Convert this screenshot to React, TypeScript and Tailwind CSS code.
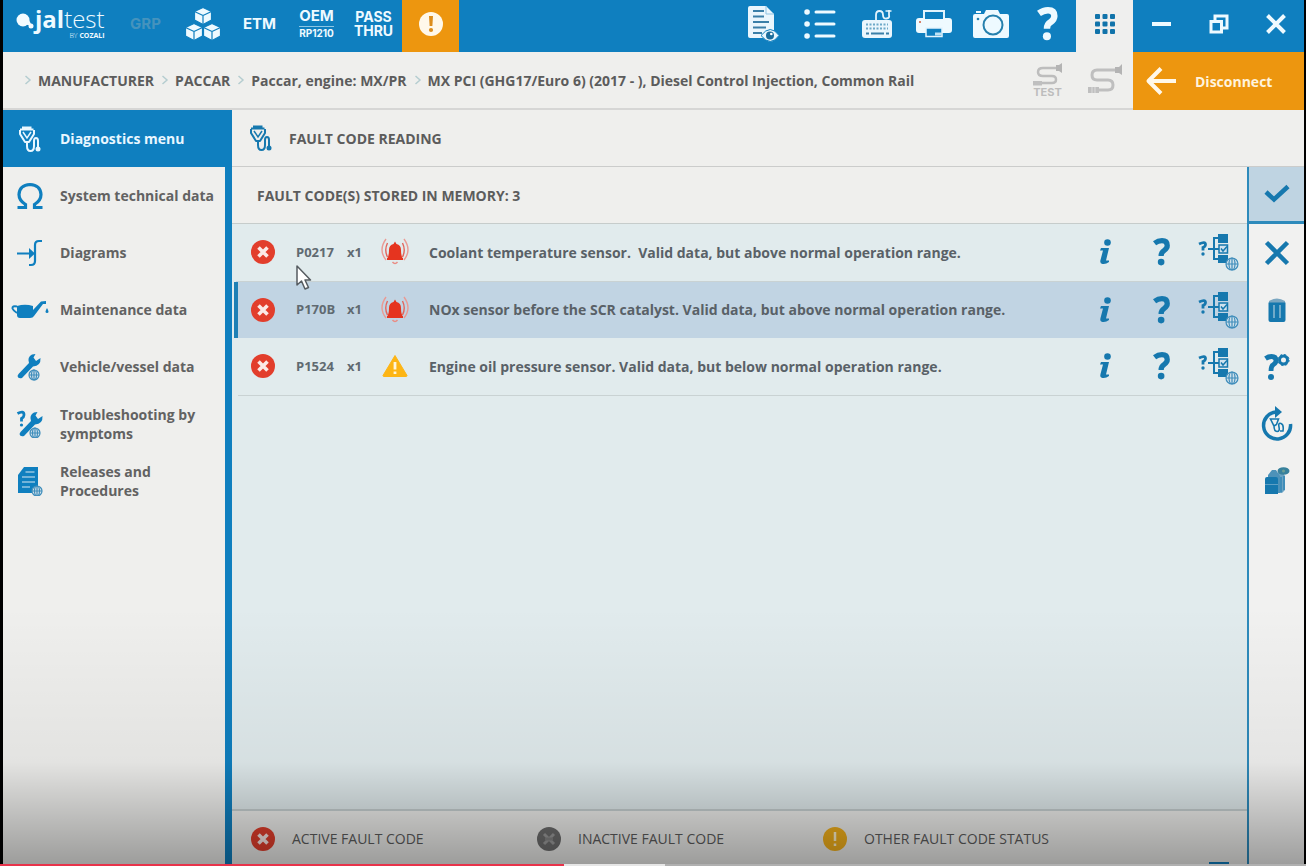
import type { ReactNode } from "react";
import clsx from "clsx";

interface IconProps {
  className?: string;
}

const CubesIcon = () => (
  <svg width="36" height="34" viewBox="0 0 36 34" fill="#eefaff" stroke="#0f7fbf" strokeWidth="1.2" strokeLinejoin="round">
    {[
      [18, 0],
      [9, 16],
      [27, 16],
    ].map(([x, y]) => (
      <g key={x} transform={`translate(${x} ${y})`}>
        <path d="M0 0.5 L8.5 4.5 V13 L0 17.5 L-8.5 13 V4.5 Z" />
        <path d="M-8.5 4.5 L0 8.5 L8.5 4.5 M0 8.5 V17.5" fill="none" />
      </g>
    ))}
  </svg>
);

const AlertIcon = () => (
  <svg width="26" height="26" viewBox="0 0 26 26">
    <circle cx="13" cy="13" r="12" fill="#fff8ea" />
    <path d="M11 5h4l-.6 10h-2.800z" fill="#dc8d1c" />
    <circle cx="13" cy="19" r="2.100" fill="#dc8d1c" />
  </svg>
);

const DocumentEyeIcon = () => (
  <svg width="34" height="38" viewBox="0 0 34 38">
    <path d="M2 3a2 2 0 0 1 2-2h16l8 8v24H4a2 2 0 0 1-2-2z" fill="#eaf6fd" />
    <path d="M20 1v8h8" fill="none" stroke="#8fc3e2" />
    <path d="M7 6h11M7 11.500h11M7 17h16M7 22.500h13M7 28h9" stroke="#3a7fa8" strokeWidth="2" />
    <path d="M15 30.500q9.500-12 18 0q-8.500 12-18 0z" fill="#eaf6fd" stroke="#0f7fbf" strokeWidth="1" />
    <circle cx="24" cy="30.500" r="4" fill="#1c6d9c" />
    <circle cx="25.300" cy="29" r="1.300" fill="#fff" />
  </svg>
);

const ListIcon = () => (
  <svg width="32" height="32" viewBox="0 0 32 32" stroke="#eefaff" strokeWidth="3" strokeLinecap="round">
    <path d="M12 4h18M12 16h18M12 28h18" />
    <path d="M3 4h.1M3 16h.1M3 28h.1" strokeWidth="5.500" />
  </svg>
);

const KeyboardIcon = () => (
  <svg width="32" height="34" viewBox="0 0 32 34" fill="none">
    <path d="M15 13V8q0-4 3.500-4t3.500 4t3.500 3.500t2.500-3.500V3" stroke="#e3f4fd" strokeWidth="1.800" />
    <path d="M24.500 4h6" stroke="#e3f4fd" strokeWidth="1.500" />
    <rect x="1" y="13" width="30" height="18" rx="3" fill="#eaf6fd" />
    <path d="M5 17.500h22M5 21.500h22" stroke="#6ca8c8" strokeWidth="2" strokeDasharray="2 1.500" />
    <path d="M5 26.500h3M10 26.500h13M25 26.500h3" stroke="#3a7fa8" strokeWidth="2" />
  </svg>
);

const PrinterIcon = () => (
  <svg width="38" height="30" viewBox="0 0 38 30">
    <path d="M9 9V2h20v7" fill="#0f7fbf" stroke="#e3f4fd" strokeWidth="2" />
    <path d="M4 9h30a3 3 0 0 1 3 3v9a3 3 0 0 1-3 3H4a3 3 0 0 1-3-3v-9a3 3 0 0 1 3-3z" fill="#eefaff" />
    <path d="M10 9h18" stroke="#0f7fbf" strokeWidth="2" />
    <circle cx="5" cy="13" r="1" fill="#d15a38" />
    <path d="M11 19h16v8.500H11z" fill="#0f7fbf" stroke="#e3f4fd" strokeWidth="1.500" />
    <path d="M20 23.500h7v3h-7z" fill="#bfe2f4" />
  </svg>
);

const CameraIcon = () => (
  <svg width="38" height="30" viewBox="0 0 38 30">
    <path d="M3 5h9l2-4h12l2 4h7a2 2 0 0 1 2 2v20a2 2 0 0 1-2 2H3a2 2 0 0 1-2-2V7a2 2 0 0 1 2-2z" fill="#eefaff" />
    <path d="M4 3h5" stroke="#eefaff" strokeWidth="2" />
    <circle cx="21" cy="16" r="9.500" fill="none" stroke="#2580ad" strokeWidth="2" />
    <circle cx="6" cy="10" r="1.300" fill="#2580ad" />
  </svg>
);

const QuestionIcon = ({ className = "w-5 h-8" }: IconProps) => (
  <svg className={className} viewBox="0 0 20 32" fill="none">
    <path d="M1.500 6q4-3 8.500-3q6 0 6 5.500q0 3.200-3.500 5.700q-3.500 2-3.500 6.300" stroke="currentColor" strokeWidth="6" />
    <circle cx="9" cy="27.500" r="3.800" fill="currentColor" />
  </svg>
);

const GridIcon = () => (
  <svg width="22" height="22" viewBox="0 0 22 22" fill="#1173aa">
    {[1, 8.5, 16].map((y) => [1, 8.5, 16].map((x) => <rect key={`${x}-${y}`} x={x} y={y} width="5" height="5" rx="1" />))}
  </svg>
);

const MinimizeIcon = () => (
  <svg width="20" height="20" viewBox="0 0 20 20" stroke="#eefaff" strokeWidth="4">
    <path d="M0 10h19" />
  </svg>
);

const RestoreIcon = () => (
  <svg width="20" height="20" viewBox="0 0 20 20" fill="none" stroke="#eefaff" strokeWidth="3">
    <path d="M6 6V2h12v12h-4" />
    <path d="M2 7.500h10.500V18H2z" />
  </svg>
);

const CloseIcon = () => (
  <svg width="20" height="20" viewBox="0 0 20 20" stroke="#eefaff" strokeWidth="4">
    <path d="M1.500 1.500l17 17M18.500 1.500l-17 17" />
  </svg>
);

const CableIcon = () => (
  <svg width="36" height="32" viewBox="0 0 36 32" fill="none" stroke="#bfbfbf">
    <path d="M28 6H10q-5 0-5 5t5 5h11q5 0 5 5t-5 5H11" strokeWidth="3" />
    <path d="M28 3v6h4l3 2V0l-3 3z" fill="#b4b4b4" stroke="none" />
    <path d="M1 23h11v6H1z" fill="#bfbfbf" stroke="none" />
    <path d="M5 23v6M8 23v6" stroke="#dcdcdc" />
  </svg>
);

const CableTestIcon = () => (
  <svg width="30" height="24" viewBox="0 0 30 24" fill="none" stroke="#bdbdbd">
    <path d="M24 5H10q-5 0-5 4t5 4h9q4 0 4 3.500T19 20H8" strokeWidth="2.500" />
    <path d="M23 2v6h3l3 2V0l-3 2z" fill="#b4b4b4" stroke="none" />
    <path d="M0 18h9v4.500H0z" fill="#bfbfbf" stroke="none" />
  </svg>
);

const ArrowLeftIcon = () => (
  <svg width="32" height="28" viewBox="0 0 32 28" fill="none" stroke="#fff8ea" strokeWidth="4">
    <path d="M2.500 14H31M16 1.500L3.500 14L16 26.500" strokeLinejoin="round" />
  </svg>
);

const ProbeIcon = () => (
  <svg width="24" height="28" viewBox="0 0 24 28" fill="none" stroke="currentColor" strokeWidth="2">
    <path d="M2 4.500L15.500 4.500M4 2.500h9.500M2 5v4l5 8h4l5-8V5" strokeLinejoin="round" />
    <path d="M5 7l4 6l4-6" strokeWidth="1.500" />
    <path d="M9 17v4q0 5 3.500 5t3.500-5v-5q0-3 2-3t2 3v7" />
    <circle cx="20" cy="24" r="2.500" fill="currentColor" stroke="none" />
  </svg>
);

const OmegaIcon = () => (
  <svg width="28" height="28" viewBox="0 0 28 28" fill="none" stroke="currentColor" strokeWidth="3.200">
    <path d="M1.500 25.500H9.500V22.500Q3 18.500 3 12.500Q3.500 3 14 2.500Q24.500 3 25 12.500Q25 18.500 18.500 22.500V25.500H26.500" />
  </svg>
);

const DiagramIcon = () => (
  <svg width="26" height="28" viewBox="0 0 26 28" fill="none" stroke="currentColor" strokeWidth="2.200">
    <path d="M0 14.500h16M25 2h-3q-4 0-4 4v16q0 4-4 4h-2" />
    <path d="M12 9l6 5.500l-6 5.500z" fill="currentColor" stroke="none" />
  </svg>
);

const OilCanIcon = () => (
  <svg width="38" height="20" viewBox="0 0 38 20">
    <path d="M6 6Q14 3.500 22 6v4L30 1.500l5-.5v3h-3L23 16q-1 2-4 2H9q-3 0-3-3z" fill="currentColor" />
    <path d="M6 6.500Q1 5.500 1.500 8.500Q2.500 11 6 13" fill="none" stroke="currentColor" strokeWidth="2" />
    <path d="M36 8q3 5 0 5t0-5z" fill="currentColor" />
  </svg>
);

const Globe = ({ x, y, r = 5 }: { x: number; y: number; r?: number }) => (
  <g transform={`translate(${x} ${y})`} fill="none" stroke="#3f8dbb" strokeWidth="1.200">
    <circle r={r} fill="#cfe0ea" />
    <ellipse rx={r / 2} ry={r} />
    <path d={`M${-r} 0H${r}M0 ${-r}V${r}`} />
  </g>
);

const wrenchPath = "M1.500 21L12 10Q10 4 15 1.500L18.500 1L16.500 4.500L19 8L23.500 5Q24 13 16 13.500L5 25Q1 26 .5 23z";

const WrenchIcon = () => (
  <svg width="26" height="28" viewBox="0 0 26 28">
    <path d={wrenchPath} fill="currentColor" />
    <Globe x={17} y={22} />
  </svg>
);

const QuestionWrenchIcon = () => (
  <svg width="28" height="28" viewBox="0 0 28 28">
    <path d="M1.500 3.500Q8 0 8 5Q8 7 5.500 8.500V11.500" fill="none" stroke="currentColor" strokeWidth="2.800" />
    <circle cx="5.500" cy="15" r="1.600" fill="currentColor" />
    <path d={wrenchPath} transform="translate(3 1)" fill="currentColor" />
    <Globe x={19} y={23} />
  </svg>
);

const DocumentGlobeIcon = () => (
  <svg width="26" height="30" viewBox="0 0 26 30">
    <path d="M7 1h14v21H7z" fill="currentColor" />
    <path d="M1 9L7 1V26H1z" fill="currentColor" />
    <path d="M1 22h14v5H1z" fill="currentColor" />
    <path d="M8.500 6h9M5 11h13M5 16h13M5 21h8" stroke="#d8e8f1" strokeWidth="1.200" />
    <Globe x={20} y={25} />
  </svg>
);

const FaultIcon = () => (
  <svg width="26" height="26" viewBox="0 0 26 26">
    <circle cx="13" cy="13" r="12" fill="#e23e2c" />
    <path d="M8.500 8.500l9 9M17.500 8.500l-9 9" stroke="#fbe9e6" strokeWidth="3.600" />
  </svg>
);

const InactiveIcon = () => (
  <svg width="26" height="26" viewBox="0 0 26 26">
    <circle cx="13" cy="13" r="12" fill="#6e6e6e" />
    <path d="M8 8l10 10M18 8l-10 10" stroke="#9c9c9c" strokeWidth="3" />
    <path d="M9 13h8" stroke="#858585" strokeWidth="3" />
  </svg>
);

const OtherStatusIcon = () => (
  <svg width="26" height="26" viewBox="0 0 26 26">
    <circle cx="13" cy="13" r="12" fill="#f2b01c" />
    <path d="M13 6v9M13 17.500v2.500" stroke="#fff3cf" strokeWidth="2.500" />
  </svg>
);

const BellIcon = () => (
  <svg width="28" height="28" viewBox="0 0 28 28" fill="none">
    <path d="M6 20.500q2-2 2-8.500q0-5 4.500-6l1.500-2.500l1.500 2.500q4.500 1 4.500 6q0 6.500 2 8.500z" fill="#e5341f" />
    <path d="M6 21h16" stroke="#e5341f" strokeWidth="2" />
    <path d="M11.500 24q2.500 3 5 0" stroke="#e98d85" strokeWidth="1.500" />
    <path d="M6.500 5q-3.500 7 0 14M21.500 5q3.500 7 0 14" stroke="#e2655c" strokeWidth="1.400" />
    <path d="M5 1q-8 11 0 21M23 1q8 11 0 21" stroke="#ea9a94" strokeWidth="1.400" />
  </svg>
);

const WarningIcon = () => (
  <svg width="26" height="24" viewBox="0 0 26 24">
    <path d="M13 1.500L25 21.500Q25 22.500 24 22.500H2Q1 22.500 1 21.500z" fill="#fdb515" stroke="#fdb515" strokeLinejoin="round" />
    <path d="M13 8v7.500M13 17.500v2.500" stroke="#fff6da" strokeWidth="2.800" />
  </svg>
);

const InfoIcon = () => (
  <svg width="14" height="28" viewBox="0 0 14 28" fill="currentColor">
    <circle cx="9.500" cy="4.500" r="3.300" />
    <path d="M3 10h8l-3 12.500h3v1.500q-3 2.500-6.500 2Q1.500 25.500 2.500 22L5 12.500H2z" />
  </svg>
);

const TreeIcon = () => (
  <svg width="44" height="40" viewBox="0 0 44 40" fill="none">
    <path d="M2 12q6.500-3 6.500.500q0 1.800-2.500 3v3" stroke="currentColor" strokeWidth="2.800" />
    <circle cx="6" cy="22" r="1.700" fill="currentColor" />
    <path d="M11 17h11M22 6h-5v21h5" stroke="currentColor" strokeWidth="2" />
    <path d="M21 2h10v9H21zM21 23h10v8H21z" fill="currentColor" />
    <path d="M22 13h8.500v8H22z" fill="#cfe2ee" stroke="currentColor" strokeWidth="1.500" />
    <path d="M24 16.500l2 2.500l4-4.500" stroke="currentColor" strokeWidth="1.500" />
    <Globe x={35} y={32} r={6} />
  </svg>
);

const CheckIcon = () => (
  <svg width="26" height="20" viewBox="0 0 26 20" fill="none" stroke="currentColor" strokeWidth="4.500">
    <path d="M2 8l8 7.500L24 2.500" />
  </svg>
);

const ClearIcon = () => (
  <svg width="26" height="26" viewBox="0 0 26 26" fill="none" stroke="currentColor" strokeWidth="4.500">
    <path d="M2.500 2.500l21 21M23.500 2.500l-21 21" />
  </svg>
);

const TrashIcon = () => (
  <svg width="20" height="28" viewBox="0 0 20 28">
    <path d="M2 5q8-5 16 0v3H2z" fill="#7ba7c1" />
    <path d="M1.500 6.500h17V24q0 2-2 2h-13q-2 0-2-2z" fill="currentColor" />
    <path d="M7 9v13M13 9v13" stroke="#8fbad2" strokeWidth="1.500" />
  </svg>
);

const QuestionGearIcon = () => (
  <svg width="28" height="30" viewBox="0 0 28 30" fill="none" stroke="currentColor">
    <path d="M2.500 6.500q3-2 6-2q4.500 0 4.500 4q0 2.500-2.500 4q-2.500 1.500-2.500 6.500" strokeWidth="4.800" />
    <circle cx="8" cy="25" r="3" fill="currentColor" stroke="none" />
    <circle cx="20.500" cy="8" r="4" strokeWidth="3" />
    <circle cx="20.500" cy="8" r="5.600" strokeWidth="1" strokeDasharray="2.200 2.200" />
  </svg>
);

const RefreshIcon = () => (
  <svg width="34" height="36" viewBox="0 0 34 36" fill="none">
    <path d="M16 6A13.500 13.500 0 1 0 30.500 18" stroke="currentColor" strokeWidth="3.500" />
    <path d="M15 0l7 6l-7 6z" fill="currentColor" />
    <g stroke="currentColor" strokeWidth="1.600">
      <path d="M10.500 13h8l-2 5.500l-2.500 1.500zM14 19.500q0 6 3 6t2-4.500t2-3.500t2 7.500h-3" />
    </g>
  </svg>
);

const ArchiveIcon = () => (
  <svg width="28" height="30" viewBox="0 0 28 30">
    <path d="M8 7h12l2 3v14l-3 3H8z" fill="#6ba3c3" />
    <path d="M5 9l4-5h4l4 6V27H5z" fill="#4d92b9" />
    <path d="M2 13q0-2 2-2h9q2 0 2 2v15H2z" fill="currentColor" />
    <path d="M2 18.500h13" stroke="#5fa0c4" />
    <path d="M18 11v15M21 10v14" stroke="currentColor" />
    <ellipse cx="20.500" cy="5" rx="6" ry="3.800" fill="#38819c" />
    <circle cx="20.500" cy="5" r="1.500" fill="#6f9f93" />
  </svg>
);

interface ToolButtonProps {
  label: string;
  children: ReactNode;
  className?: string;
}

function ToolButton({ label, children, className }: ToolButtonProps) {
  return (
    <button
      aria-label={label}
      className={clsx("w-[57px] h-full shrink-0 flex flex-col items-center justify-center font-[Inter] leading-[14px] font-bold", className)}
    >
      {children}
    </button>
  );
}

const crumbs = [
  "MANUFACTURER",
  "PACCAR",
  "Paccar, engine: MX/PR",
  "MX PCI (GHG17/Euro 6) (2017 - ), Diesel Control Injection, Common Rail",
];

const menu = [
  { label: "Diagnostics menu", icon: <ProbeIcon />, active: true },
  { label: "System technical data", icon: <OmegaIcon /> },
  { label: "Diagrams", icon: <DiagramIcon /> },
  { label: "Maintenance data", icon: <OilCanIcon /> },
  { label: "Vehicle/vessel data", icon: <WrenchIcon /> },
  { label: "Troubleshooting by symptoms", icon: <QuestionWrenchIcon /> },
  { label: "Releases and Procedures", icon: <DocumentGlobeIcon /> },
];

const faults = [
  { code: "P0217", count: "x1", icon: <BellIcon />, text: "Coolant temperature sensor. \u00a0Valid data, but above normal operation range." },
  { code: "P170B", count: "x1", icon: <BellIcon />, text: "NOx sensor before the SCR catalyst. Valid data, but above normal operation range.", selected: true },
  { code: "P1524", count: "x1", icon: <WarningIcon />, text: "Engine oil pressure sensor. Valid data, but below normal operation range." },
];

const railActions = [
  { label: "Clear", icon: <ClearIcon /> },
  { label: "Delete", icon: <TrashIcon /> },
  { label: "Guided help", icon: <QuestionGearIcon /> },
  { label: "Read again", icon: <RefreshIcon /> },
  { label: "Archive", icon: <ArchiveIcon /> },
];

const legend = [
  { label: "ACTIVE FAULT CODE", icon: <FaultIcon /> },
  { label: "INACTIVE FAULT CODE", icon: <InactiveIcon /> },
  { label: "OTHER FAULT CODE STATUS", icon: <OtherStatusIcon /> },
];

function Header() {
  return (
    <header className="h-[52px] shrink-0 flex bg-[#0f7fbf] text-[#eefaff] [&>button]:pb-1">
      <div className="w-[114px] shrink-0 flex items-start pl-3 pt-2">
        <svg width="20" height="24" viewBox="0 0 20 24" fill="#f4fcff">
          <circle cx="8" cy="12" r="6.500" />
          <path d="M9 16l5-4l3 6z" />
          <circle cx="16" cy="18" r="2.500" />
        </svg>
        <div className="flex flex-col items-end">
          <span className="text-2xl leading-[22px] font-light">
            <b className="font-bold">jal</b>test
          </span>
          <span className="text-[7px] leading-[12px] font-light">
            BY <b className="font-bold">COZALI</b>
          </span>
        </div>
      </div>
      <ToolButton label="GRP" className="text-[15px] text-[#4593bd]">GRP</ToolButton>
      <ToolButton label="Modules"><CubesIcon /></ToolButton>
      <ToolButton label="ETM" className="text-[15px]">ETM</ToolButton>
      <ToolButton label="OEM RP1210" className="text-[15px]">
        <span>OEM</span>
        <span className="mt-[3px] border-t border-[#8cc6e4] text-[10px] leading-[12px]">RP1210</span>
      </ToolButton>
      <ToolButton label="PASS THRU" className="text-[14px]">
        <span>PASS</span>
        <span>THRU</span>
      </ToolButton>
      <ToolButton label="Warnings" className="bg-[#ed960f]"><AlertIcon /></ToolButton>
      <div className="flex-1" />
      <ToolButton label="Report preview"><DocumentEyeIcon /></ToolButton>
      <ToolButton label="List"><ListIcon /></ToolButton>
      <ToolButton label="Keyboard"><KeyboardIcon /></ToolButton>
      <ToolButton label="Print"><PrinterIcon /></ToolButton>
      <ToolButton label="Screenshot"><CameraIcon /></ToolButton>
      <ToolButton label="Help"><QuestionIcon className="w-[22px] h-[34px]" /></ToolButton>
      <ToolButton label="Applications" className="bg-[#efefee]"><GridIcon /></ToolButton>
      <ToolButton label="Minimize"><MinimizeIcon /></ToolButton>
      <ToolButton label="Restore"><RestoreIcon /></ToolButton>
      <ToolButton label="Close"><CloseIcon /></ToolButton>
    </header>
  );
}

function Breadcrumbs() {
  return (
    <div className="h-[58px] shrink-0 flex border-b-2 border-[#d6d6d5]">
      <nav className="flex-1 flex items-center pl-5 text-[14px] font-bold">
        {crumbs.map((crumb) => (
          <span key={crumb} className="flex items-center">
            <svg width="15" height="10" viewBox="0 0 15 10" fill="none" stroke="#b5cdd0" strokeWidth="1.500">
              <path d="M2.500 1L7 5L2.500 9" />
            </svg>
            <a href="#" className="mr-[6px] whitespace-nowrap">{crumb}</a>
          </span>
        ))}
      </nav>
      <ToolButton label="Cable test" className="text-[11px] text-[#bdbdbd]">
        <CableTestIcon />
        <span className="leading-[11px]">TEST</span>
      </ToolButton>
      <ToolButton label="Cable"><CableIcon /></ToolButton>
      <button className="w-[171px] -mb-[2px] shrink-0 flex items-center pl-3 gap-[18px] bg-[#ed960f] text-[#fff3dd] text-[14px] font-bold">
        <ArrowLeftIcon />
        Disconnect
      </button>
    </div>
  );
}

function Sidebar() {
  return (
    <aside className="w-[229px] shrink-0 border-r-[7px] border-[#0f7fbf]">
      {menu.map((item) => (
        <button
          key={item.label}
          className={clsx(
            "w-full h-[57px] flex items-center text-left text-[14px] leading-[19px] font-bold",
            item.active ? "bg-[#0f7fbf] text-[#e9f7ff]" : "text-[#0f7fbf]"
          )}
        >
          <span className="w-[53px] mr-1 shrink-0 flex justify-center">{item.icon}</span>
          <span className={item.active ? "" : "text-[#626262]"}>{item.label}</span>
        </button>
      ))}
    </aside>
  );
}

function FaultTable() {
  return (
    <table className="w-full table-fixed border-collapse text-[#1678ae]">
      <colgroup>
        <col className="w-[60px]" />
        <col className="w-[51px]" />
        <col className="w-[21px]" />
        <col className="w-[57px]" />
        <col />
        <col className="w-[57px]" />
        <col className="w-[57px]" />
        <col className="w-[57px]" />
      </colgroup>
      <tbody className="text-[14px] font-bold">
        {faults.map((fault) => (
          <tr key={fault.code} className={clsx("h-[57px]", fault.selected ? "bg-[#c1d4e3]" : "border-b border-[#c9d2d3]")}>
            <td className={clsx("border-l-4 pr-2", fault.selected ? "border-l-[#1e80b5]" : "border-l-transparent")}>
              <span className="flex justify-center"><FaultIcon /></span>
            </td>
            <td className="text-[13px] text-[#606a71]">{fault.code}</td>
            <td className="text-[13px] text-[#606a71]">{fault.count}</td>
            <td className="pr-1"><span className="flex justify-center">{fault.icon}</span></td>
            <td className="pl-1 text-[#596167]">{fault.text}</td>
            <td><button aria-label="Information" className="w-full flex justify-center"><InfoIcon /></button></td>
            <td><button aria-label="Help" className="w-full flex justify-center"><QuestionIcon className="w-[18px] h-7" /></button></td>
            <td><button aria-label="Troubleshooting" className="w-full flex justify-center"><TreeIcon /></button></td>
          </tr>
        ))}
      </tbody>
    </table>
  );
}

function Rail() {
  return (
    <div className="w-[57px] shrink-0 flex flex-col border-l-2 border-[#2d8abb] bg-[#f1f1f0] text-[#1678ae]">
      <button aria-label="Confirm" className="h-[57px] flex items-center justify-center bg-[#bfd4e2] border-b-3 border-[#2d8abb]">
        <CheckIcon />
      </button>
      {railActions.map((action) => (
        <button key={action.label} aria-label={action.label} className="h-[57px] flex items-center justify-center">
          {action.icon}
        </button>
      ))}
      <div className="flex-1" />
    </div>
  );
}

export default function App() {
  return (
    <div className="relative h-screen min-h-[600px] flex flex-col overflow-hidden bg-black pl-[3px] pr-[2px] font-['Open_Sans',sans-serif] text-[#5c5c5c]">
      <Header />
      <div className="flex-1 min-h-0 flex flex-col bg-[#efefed]">
        <Breadcrumbs />
        <div className="flex-1 min-h-0 flex">
          <Sidebar />
          <main className="flex-1 min-w-0 flex flex-col">
            <div className="h-[57px] shrink-0 flex items-center border-b border-[#cbcccb] text-[#1678ae]">
              <span className="w-[57px] flex justify-center"><ProbeIcon /></span>
              <h1 className="text-[14px] font-bold text-[#5c5c5c]">FAULT CODE READING</h1>
            </div>
            <div className="flex-1 min-h-0 flex">
              <section className="flex-1 min-w-0 flex flex-col">
                <h2 className="h-[57px] shrink-0 flex items-center pl-[25px] border-b border-[#c6cccb] text-[14px] font-bold">
                  FAULT CODE(S) STORED IN MEMORY: 3
                </h2>
                <div className="flex-1 bg-[#e1ebed] pl-[2px]">
                  <FaultTable />
                </div>
                <footer className="relative h-[57px] shrink-0 flex items-center pl-[18px] border-t-2 border-[#c6cfd0] text-[14px] font-medium">
                  {legend.map((item) => (
                    <div key={item.label} className="w-[286px] flex items-center gap-4">
                      {item.icon}
                      {item.label}
                    </div>
                  ))}
                  <span className="absolute bottom-0 right-[18px] w-5 h-1 bg-[#0f7fbf]" />
                </footer>
              </section>
              <Rail />
            </div>
          </main>
        </div>
      </div>

      {/* player shade and progress line */}
      <div className="absolute inset-x-0 bottom-0 h-[260px] pointer-events-none bg-linear-to-b from-transparent via-black/5 via-60% to-black/35" />
      <div className="absolute inset-x-0 bottom-0 h-[2px] flex bg-[#b0b0b0]">
        <div className="w-[43.2%] bg-[#e8334a]" />
        <div className="w-[7.7%] bg-[#e6e6e6]" />
      </div>

      <svg className="absolute left-[295px] top-[264px]" width="18" height="27" viewBox="0 0 18 27">
        <path d="M2 2V21L6.500 17L10 25L13.500 23.500L10 16H15.500z" fill="#fff" stroke="#555b60" strokeWidth="1.500" strokeLinejoin="round" />
      </svg>
    </div>
  );
}
